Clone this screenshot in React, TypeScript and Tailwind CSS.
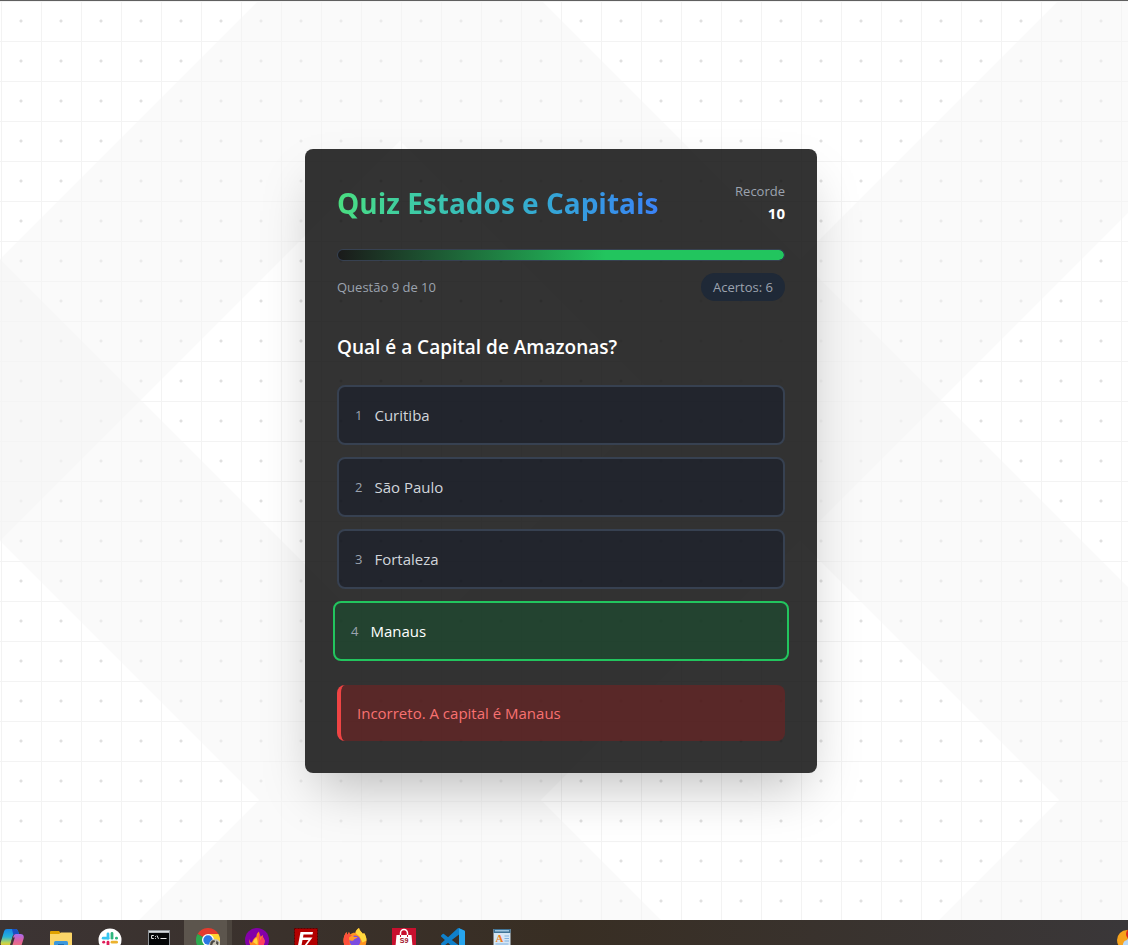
import type { ReactNode } from "react";

type Option = { id: number; label: string; correct: boolean };

const options: Option[] = [
  { id: 1, label: "Curitiba", correct: false },
  { id: 2, label: "São Paulo", correct: false },
  { id: 3, label: "Fortaleza", correct: false },
  { id: 4, label: "Manaus", correct: true },
];

function OptionButton({ option }: { option: Option }) {
  const state = option.correct
    ? "-mx-1 border-[#22c55e] bg-[#14532d]/50 text-white"
    : "border-[#374151] bg-[#111827]/50 text-[#d1d5db]";
  return (
    <button
      type="button"
      className={`flex items-center gap-3 rounded-lg border-2 p-4 text-left text-[15px] leading-6 ${state}`}
    >
      <span className="text-[13px] text-[#9ca3af]">{option.id}</span>
      <span>{option.label}</span>
    </button>
  );
}

function QuizCard() {
  return (
    <section className="w-full max-w-lg rounded-lg bg-black/80 p-8 shadow-[0_25px_50px_-12px_rgba(0,0,0,0.25)]">
      <header className="mb-6 flex items-center justify-between">
        <h1 className="bg-linear-to-r from-[#4ade80] to-[#3b82f6] bg-clip-text text-[28px] leading-11 font-bold text-transparent">
          Quiz Estados e Capitais
        </h1>
        <div className="text-right">
          <p className="text-[13px] leading-5 text-[#9ca3af]">Recorde</p>
          <p className="text-[15px] leading-6 font-bold text-white">10</p>
        </div>
      </header>

      <div
        role="progressbar"
        aria-label="Progresso"
        aria-valuenow={9}
        aria-valuemin={0}
        aria-valuemax={10}
        className="mb-3 h-3 overflow-hidden rounded-full border border-[#374151] bg-[#1f2937]"
      >
        <div className="h-full rounded-full bg-[linear-gradient(90deg,#1a1a1a_0%,#22c55e_60%)]" />
      </div>

      <div className="mb-8 flex items-center justify-between text-[13px] leading-5 text-[#9ca3af]">
        <span>Questão 9 de 10</span>
        <span className="rounded-full bg-[#1f2937] px-3 py-1">Acertos: 6</span>
      </div>

      <h2 className="mb-6 text-[19px] leading-7 font-semibold text-white">
        Qual é a Capital de Amazonas?
      </h2>

      <div className="flex flex-col gap-3">
        {options.map((option) => (
          <OptionButton key={option.id} option={option} />
        ))}
      </div>

      <p
        role="status"
        className="mt-6 rounded-lg border-l-4 border-[#ef4444] bg-[#7f1d1d]/50 p-4 text-[15px] leading-6 text-[#f87171]"
      >
        Incorreto. A capital é Manaus
      </p>
    </section>
  );
}

function Backdrop() {
  return (
    <svg className="absolute inset-0 -z-10 size-full" aria-hidden="true">
      <defs>
        <pattern id="bands" width="800" height="800" patternUnits="userSpaceOnUse" patternTransform="translate(0 -1)">
          <path
            d="M259 0H541L0 541V259zM800 259V541L541 800H259zM0 259 541 800H259L0 541zM259 0H541L800 259V541z"
            fill="#f5f5f5"
            fillOpacity="0.5"
          />
          <path d="M0 259 141 400 0 541zM800 259 659 400 800 541z" fill="#f5f5f5" fillOpacity="0.5" />
        </pattern>
      </defs>
      <rect width="100%" height="100%" fill="url(#bands)" />
    </svg>
  );
}

function Icon({ children }: { children: ReactNode }) {
  return (
    <svg viewBox="0 0 24 24" className="size-6" aria-hidden="true">
      {children}
    </svg>
  );
}

const apps: { name: string; active?: boolean; icon: ReactNode }[] = [
  {
    name: "Copilot",
    icon: (
      <Icon>
        <defs>
          <linearGradient id="cpA" x1="0" y1="0" x2="0" y2="1">
            <stop offset="0" stopColor="#1687e8" />
            <stop offset=".45" stopColor="#27b3d8" />
            <stop offset=".8" stopColor="#c5d64a" />
            <stop offset="1" stopColor="#f0b92c" />
          </linearGradient>
          <linearGradient id="cpB" x1="0" y1="0" x2="0" y2="1">
            <stop offset="0" stopColor="#a86bf0" />
            <stop offset=".4" stopColor="#e0619f" />
            <stop offset="1" stopColor="#f58a5b" />
          </linearGradient>
        </defs>
        <path d="M7 1h8.500c1.500 0 2.300 1 2.700 2.500L19 6h-3.500c-1.700 0-2.600 1-3 2.500L10.500 16c-.5 1.800-1.500 2.500-3 2.500H4c-2.500 0-4-1.500-3-5L4 3.500C4.500 1.800 5.500 1 7 1z" fill="url(#cpA)" />
        <path d="M12 1h3.500c1.500 0 2.300 1 2.700 2.500L19 6h-3.500c-1 0-1.700.3-2.200.9z" fill="#1a4fc4" />
        <path d="M17 6h3.500c2.500 0 4 1.500 3 5l-3 9.500c-.5 1.700-1.500 2.500-3 2.500H9c-1.500 0-2.300-1-2.700-2.500L6 18h2c1.700 0 2.600-1 3-2.500L13.500 8c.5-1.500 1.500-2 3.500-2z" fill="url(#cpB)" />
        <path d="M12.500 9.500h2.300l-2.500 8H10z" fill="#3c3434" />
      </Icon>
    ),
  },
  {
    name: "Explorador de Arquivos",
    icon: (
      <Icon>
        <path d="M1 4a1 1 0 0 1 1-1h8l1.500 2H22a1 1 0 0 1 1 1v2H1z" fill="#e0a100" />
        <path d="M1 6h9l2-1.500h10a1 1 0 0 1 1 1V20H1z" fill="#fbd568" />
        <path d="M5 21v-6.500A1.500 1.500 0 0 1 6.500 13h11a1.500 1.500 0 0 1 1.500 1.500V21z" fill="#3d98dc" />
        <path d="M9 16h6v5H9z" fill="#1b6bb0" />
      </Icon>
    ),
  },
  {
    name: "Slack",
    icon: (
      <Icon>
        <circle cx="12" cy="12" r="11.500" fill="#fff" />
        <g strokeWidth="2.800" strokeLinecap="round" fill="none">
          <path d="M10 6v4.200" stroke="#36c5f0" />
          <path d="M5.200 10.200H10" stroke="#36c5f0" />
          <path d="M14 5.400v4.800" stroke="#2eb67d" />
          <path d="M18.400 10.200h.2" stroke="#2eb67d" />
          <path d="M14 14.200h4.600" stroke="#ecb22e" />
          <path d="M14 18.600v.2" stroke="#ecb22e" />
          <path d="M10 14.200v4.600" stroke="#e01e5a" />
          <path d="M5.600 14.200h.2" stroke="#e01e5a" />
        </g>
      </Icon>
    ),
  },
  {
    name: "Prompt de Comando",
    icon: (
      <Icon>
        <path d="M1 2h22v19H1z" fill="#8f9499" />
        <path d="M2 5h20v15H2z" fill="#050607" />
        <path d="M2 3h20v1.500H2z" fill="#d6dadd" />
        <path d="M6.800 7.500H4.600v3h2.200M8.500 8v.8M8.500 10v.8M10 7.500l1.500 3.300M13.500 10.500h6" stroke="#e8e8e8" strokeWidth="1" fill="none" />
      </Icon>
    ),
  },
  {
    name: "Chrome",
    active: true,
    icon: (
      <Icon>
        <path d="M12 12 1.600 6A12 12 0 0 1 22.400 6z" fill="#e33b2e" />
        <path d="M12 12 1.600 6A12 12 0 0 0 12 24l5-9z" fill="#2da94f" />
        <path d="M12 12V6h10.400A12 12 0 0 1 12 24z" fill="#fdd633" />
        <circle cx="12" cy="12" r="6" fill="#fff" />
        <circle cx="12" cy="12" r="4.700" fill="#2a78e4" />
        <circle cx="19" cy="17" r="6" fill="#c9c5b8" />
        <path d="M14.500 14.500c1-2 2.500-2.500 4-2.200l.5 1.500-2 1-1 3-2-.5z" fill="#4b4842" />
        <path d="M20.500 12.500l2 2-.5 3-2-2z" fill="#4b4842" />
      </Icon>
    ),
  },
  {
    name: "Flame",
    icon: (
      <Icon>
        <circle cx="12" cy="12" r="12" fill="#8400a8" />
        <path d="M4.500 11c.5 3 1 4 2.500 3.500C8 12 9 10 11.500 8.500c0-2 .5-3.500 2.500-5 0 2.500 1.500 3.500 1.500 5.500l2.500-2c-.5 2 .5 3 1.500 5 .8 4-2.500 9-7.500 9s-8.500-4-7.500-10z" fill="#ff8a1f" />
        <path d="M14 3.500c0 2.500 1.500 3.500 1.500 5.500L14 14l4-7c-.5 2 .5 3 1.500 5 .5 4-2 8-6 9z" fill="#ff4060" />
        <path d="M8 14c1-2 2-3.500 3.500-4.500.5 2 1.500 3 1 7.500z" fill="#ffd43b" />
      </Icon>
    ),
  },
  {
    name: "FileZilla",
    icon: (
      <Icon>
        <path d="M.5.500h23v23H.5z" fill="#b30000" stroke="#5e0000" strokeDasharray="2 1" />
        <path d="M6.500 4H19l-.5 2.500H9.500L9 9.500h9.500l-6 8H18l-.5 2.500H8.500l6-8H8.500L7 20H3.500z" fill="#fff" />
      </Icon>
    ),
  },
  {
    name: "Firefox",
    icon: (
      <Icon>
        <path d="M12 24C5 24 .5 19 .5 12.500c0-3 1-6 3-8.500l.7 3 1.800-3 1 2.500c2-1.500 4-2 5.500-1.500 0-2 1.500-4 3.500-5 .5 3 2.500 3.500 4 6l1-1c1.500 2 2.500 4.500 2.500 7.500C23.500 19 19 24 12 24z" fill="#ff9320" />
        <path d="M.5 12.500c0-3 1-6 3-8.500l.7 3 1.800-3 1 2.500 3 2-4 3 1 6-2 4C2 19.500.5 16 .5 12.500z" fill="#ff4f3b" />
        <path d="M12.500 5c0-2 1.500-4 3.500-5 .5 3 2.500 3.500 4 6l1-1c1.500 2 2.500 4.500 2.500 7.500l-4 2-3-6z" fill="#ffd83d" />
        <circle cx="12" cy="13" r="5.500" fill="#7a4ce0" />
        <path d="M6 9.500c2-2 4-2 5.500-.5h3.200c-1 1.500-3 1.600-3.700 2.500-.5 2-3.500 1.500-5 0z" fill="#ff9a2b" />
      </Icon>
    ),
  },
  {
    name: "S9",
    icon: (
      <Icon>
        <path d="M0 0h24v24H0z" fill="#c8102e" />
        <path d="M4.500 7h15l1.500 17H3z" fill="#fff" />
        <path d="M8.500 8V5a3.500 3.500 0 0 1 7 0v3" stroke="#fff" strokeWidth="1.500" fill="none" />
        <path d="M8.500 7v2M15.500 7v2" stroke="#c8102e" strokeWidth="1" />
        <text x="12" y="15" textAnchor="middle" fontFamily="Liberation Sans, sans-serif" fontSize="7" fontWeight="700" fill="#a00d25">
          S9
        </text>
      </Icon>
    ),
  },
  {
    name: "Visual Studio Code",
    icon: (
      <Icon>
        <path
          d="M23.150 2.587L18.210.210a1.494 1.494 0 0 0-1.705.290l-9.460 8.630-4.120-3.128a.999.999 0 0 0-1.276.057L.327 7.261A1 1 0 0 0 .326 8.740L3.899 12 .326 15.260a1 1 0 0 0 .001 1.479L1.650 17.940a.999.999 0 0 0 1.276.057l4.120-3.128 9.460 8.630a1.492 1.492 0 0 0 1.704.290l4.942-2.377A1.500 1.500 0 0 0 24 20.060V3.939a1.500 1.500 0 0 0-.850-1.352zm-5.146 14.861L10.826 12l7.178-5.448v10.896z"
          fill="#0f80cb"
        />
        <path d="M18 .2l5.150 2.387A1.500 1.500 0 0 1 24 3.939V20.060a1.500 1.500 0 0 1-.850 1.352L18 23.800z" fill="#27a5ee" />
      </Icon>
    ),
  },
  {
    name: "WordPad",
    icon: (
      <Icon>
        <path d="M3.500 1h17v22h-17z" fill="#d5e6f4" />
        <path d="M3.500 1h17v4h-17z" fill="#3f7396" />
        <path d="M5 2h14v1.500H5z" fill="#9fc6e0" />
        <path d="M14.500 8h4.500M14.500 10.500h4.500M14.500 13h4.500M5.500 16h13" stroke="#7fb0df" strokeWidth="1" />
        <text x="9.500" y="14" textAnchor="middle" fontFamily="Liberation Serif, serif" fontSize="11" fontWeight="700" fill="#ef7d1a">
          A
        </text>
      </Icon>
    ),
  },
];

function Taskbar() {
  return (
    <footer className="flex h-[25px] justify-between overflow-hidden bg-linear-to-r from-[#3c3434] via-[#382e23] to-[#3a3739]">
      <nav aria-label="Aplicativos" className="-ml-3 flex gap-px">
        {apps.map((app) => (
          <button
            key={app.name}
            type="button"
            aria-label={app.name}
            className={`flex w-12 shrink-0 items-start justify-center pt-2 ${
              app.active ? "bg-linear-to-r from-[#5c554d] from-90% to-[#4b443d] to-90%" : ""
            }`}
          >
            {app.icon}
          </button>
        ))}
      </nav>
      <button type="button" aria-label="Clima" className="-mr-3 flex items-start pt-2">
        <Icon>
          <circle cx="11" cy="12" r="10" fill="#f6a21c" />
          <circle cx="16" cy="6" r="6" fill="#d8281e" />
          <path d="M8 20a5 5 0 0 1 3-8 6 6 0 0 1 11 2v6z" fill="#b9d8f7" />
        </Icon>
      </button>
    </footer>
  );
}

const grid = [
  "bg-white",
  "bg-[radial-gradient(circle,#e0e0e0_1px,transparent_2px),linear-gradient(90deg,#f3f3f3_1px,transparent_1px),linear-gradient(180deg,#f3f3f3_1px,transparent_1px)]",
  "bg-size-[40px_40px]",
  "bg-position-[1px_0px]",
].join(" ");

export default function App() {
  return (
    <div className="flex min-h-screen flex-col border-t border-[#5f5f5f] font-['Open_Sans','Noto_Sans',sans-serif]">
      <main className={`relative isolate flex flex-1 items-center justify-center py-8 pr-1.5 ${grid}`}>
        <Backdrop />
        <QuizCard />
      </main>
      <Taskbar />
    </div>
  );
}
